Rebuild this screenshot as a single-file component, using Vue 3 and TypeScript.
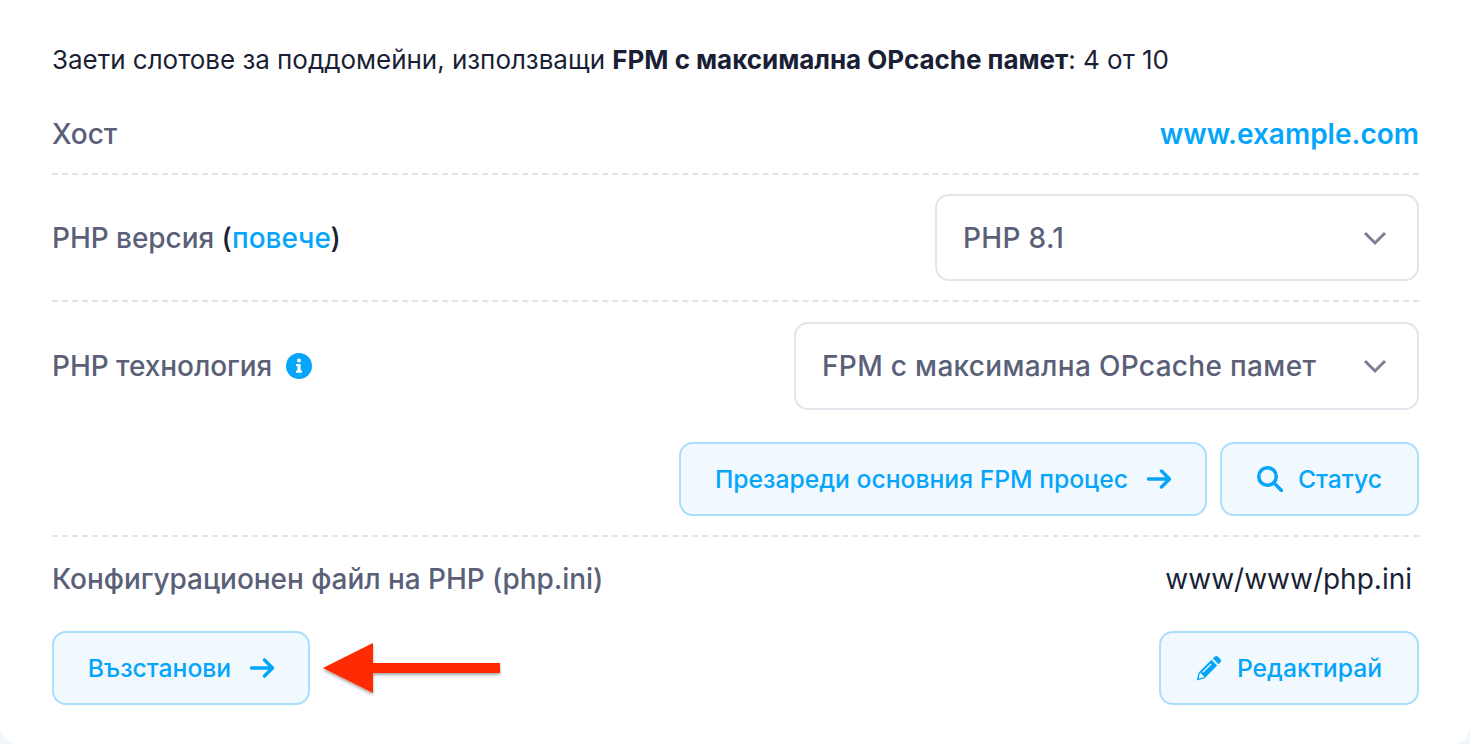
<script setup lang="ts">
const arrow = 'M1.5 12h21M14.5 4l8 8-8 8'
</script>

<template>
  <main class="card">
    <p class="intro">Заети слотове за поддомейни, използващи <b>FPM с максимална OPcache памет</b>: 4 от 10</p>

    <div class="row host dashed">
      <span class="label">Хост</span>
      <a class="link strong">www.example.com</a>
    </div>

    <div class="row ver dashed">
      <span class="label">PHP версия <span class="paren">(<a class="link med">повече</a>)</span></span>
      <div class="select s1"><span>PHP 8.1</span><svg class="chev" viewBox="0 0 22 12"><path d="M1 1l10 10L21 1" /></svg></div>
    </div>

    <div class="row tech">
      <span class="label tech-label">PHP технология
        <svg class="info" viewBox="0 0 26 26">
          <circle cx="13" cy="13" r="13" fill="#05a5fb" />
          <circle cx="13" cy="7.6" r="2" fill="#fff" />
          <path d="M10 11h4.6v6.6H16v2.2h-6v-2.2h1.5v-4.4H10z" fill="#fff" />
        </svg>
      </span>
      <div class="select s2"><span>FPM с максимална OPcache памет</span><svg class="chev" viewBox="0 0 22 12"><path d="M1 1l10 10L21 1" /></svg></div>
    </div>

    <div class="actions dashed">
      <button class="btn b-reload">Презареди основния FPM процес <svg class="ico" viewBox="0 0 24 24"><path :d="arrow" /></svg></button>
      <button class="btn b-status"><svg class="ico search" viewBox="0 0 26 26"><circle cx="10.5" cy="10.5" r="8.75" /><path d="M17 17l7.5 7.5" /></svg> Статус</button>
    </div>

    <div class="row conf">
      <span class="label">Конфигурационен файл на PHP (php.ini)</span>
      <span class="path">www/www/php.ini</span>
    </div>

    <div class="row bottom">
      <button class="btn b-restore">Възстанови <svg class="ico" viewBox="0 0 24 24"><path :d="arrow" /></svg></button>
      <button class="btn b-edit">
        <svg class="pencil" viewBox="0 0 26 26">
          <path d="M.6 25.4l2.2-8L15.4 4.8l5.8 5.8L8.6 23.2z" fill="#05a5fb" />
          <path d="M16.8 3.4l1.5-1.5a2.8 2.8 0 0 1 4 0l1.8 1.8a2.8 2.8 0 0 1 0 4l-1.5 1.5z" fill="#05a5fb" />
          <path d="M4.4 18.8l2.8 2.8-3.6.9zM6.6 17.4l8.4-8.4" fill="#f1f9fe" stroke="#f1f9fe" stroke-width="1.3" />
        </svg>
        Редактирай
      </button>
    </div>

    <svg class="pointer" viewBox="0 0 190 60" width="190" height="60">
      <defs>
        <filter id="sh" x="-10%" y="-20%" width="120%" height="150%">
          <feDropShadow dx="0" dy="2" stdDeviation="1.6" flood-color="#000" flood-opacity=".35" />
        </filter>
      </defs>
      <path d="M3 28L53 3v20h127v10H53v20z" fill="#ff2a00" filter="url(#sh)" />
    </svg>
  </main>
</template>

<style>
html, body { margin: 0; background: #f1f6fb; }
</style>

<style scoped>
.card {
  position: relative;
  box-sizing: border-box;
  width: 1470px;
  height: 744px;
  padding: 44px 51px 0 52px;
  background: #fff;
  border-radius: 0 0 18px 18px;
  font-family: Inter, "Noto Sans", sans-serif;
  font-size: 28px;
  line-height: 32px;
  color: #1a1f36;
}
.intro { margin: 0; font-size: 26px; letter-spacing: -0.03px; }
.intro b { font-weight: 700; }
.row { display: flex; justify-content: space-between; align-items: center; }
.dashed { border-bottom: 2px dashed #e2e2ea; }
.label { color: #5a6078; font-weight: 500; letter-spacing: -0.05px; }
.paren { color: #1a1f36; }
.link { color: #05a5fb; }
.strong { font-weight: 600; }
.med { font-weight: 500; }
.host { margin-top: 33px; height: 66px; box-sizing: border-box; padding-bottom: 14px; }
.ver { height: 127px; padding: 20px 0; box-sizing: border-box; }
.tech { margin-top: 20px; }
.tech-label { display: flex; align-items: center; gap: 14px; }
.info { width: 26px; height: 26px; }
.select {
  box-sizing: border-box;
  display: flex;
  align-items: center;
  justify-content: space-between;
  border: 2px solid #e3e5ec;
  border-radius: 14px;
  background: #fff;
  color: #5a6078;
  font-weight: 500;
  letter-spacing: 0.33px;
  padding: 0 31px 0 26px;
}
.s1 { width: 484px; height: 87px; }
.s2 { width: 625px; height: 88px; }
.chev { width: 22px; height: 12px; fill: none; stroke: #7a7f95; stroke-width: 3; overflow: visible; }
.actions {
  display: flex;
  justify-content: flex-end;
  gap: 13px;
  margin-top: 32px;
  padding-bottom: 19px;
}
.btn {
  box-sizing: border-box;
  display: inline-flex;
  align-items: center;
  justify-content: center;
  height: 74px;
  border: 2px solid #a9defc;
  border-radius: 14px;
  background: #f1f9fe;
  color: #05a5fb;
  font: 500 24.7px/30px Inter, "Noto Sans", sans-serif;
  padding: 0;
}
.b-reload { width: 528px; gap: 19px; }
.b-status { width: 199px; gap: 15px; }
.b-restore { width: 258px; gap: 19px; }
.b-edit { width: 260px; gap: 15px; }
.ico { width: 24px; height: 24px; fill: none; stroke: #05a5fb; stroke-width: 3.4; stroke-linecap: round; stroke-linejoin: round; }
.search { width: 26px; height: 26px; stroke-width: 3.5; }
.pencil { width: 26px; height: 26px; }
.conf { margin-top: 26px; }
.path { padding-right: 7px; }
.bottom { margin-top: 36px; }
.pointer { position: absolute; left: 320px; top: 640px; }
</style>
